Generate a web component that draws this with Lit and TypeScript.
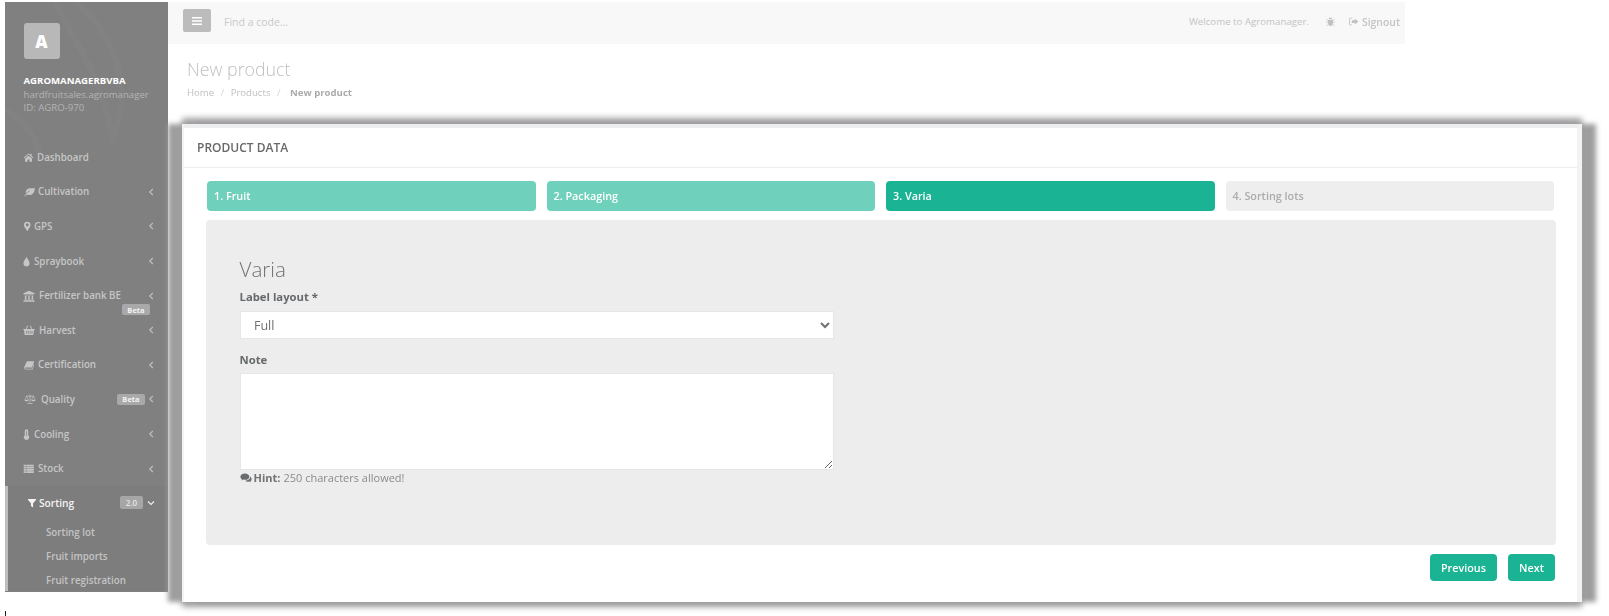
import { LitElement, html, css, svg } from "lit";
import { customElement } from "lit/decorators.js";

const ICONS: Record<string, any> = {
  home: svg`<path d="M8 2 1 8l.8 1L8 3.8 14.2 9l.8-1-2.5-2.1V2.6h-1.8v1.8z"/><path d="M3 9.6 8 5.4l5 4.2V14H9.5v-3h-3v3H3z"/>`,
  leaf: svg`<path d="M15.500 2c-1 1-3 1.400-6 1.400C5 3.400 2.500 6 2.500 9c0 .7.1 1.300.3 1.900C4 9 6 7.500 9.500 6.500 6.500 8 3.500 10.500.5 14.500l1.200.6c.7-1 1.400-1.900 2.300-2.700 1 .6 2.300.9 3.500.8C13.500 13 16 8 15.500 2z"/>`,
  marker: svg`<path fill-rule="evenodd" d="M8 1a5 5 0 0 0-5 5c0 1.100.3 1.900.7 2.700L8 15.500l4.300-6.800c.4-.8.7-1.600.7-2.700a5 5 0 0 0-5-5zm0 7.200a2.300 2.300 0 1 1 0-4.600 2.300 2.300 0 0 1 0 4.600z"/>`,
  tint: svg`<path d="M8 1c-.6 2.500-4.500 6-4.500 9.500a4.500 4.500 0 0 0 9 0C12.500 7 8.600 3.500 8 1z"/>`,
  bank: svg`<path d="M8 1 .5 4.300V5.500h15V4.300zM2 6.200v.8h12v-.8zM2.500 7.500v5h2v-5zM7 7.500v5h2v-5zM11.500 7.500v5h2v-5zM1.500 13v1h13v-1zM.5 14.300v1.200h15v-1.200z"/>`,
  basket: svg`<path d="M.5 6.500h15v1.500h-.8l-1 6.500H2.300l-1-6.500H.5z"/><path d="M3.500 6.500 5.800 2l1 .5-2 4zM12.500 6.500 10.200 2l-1 .5 2 4z"/><path fill="#808080" d="M4 9h1v4H4zM6.500 9h1v4h-1zM9 9h1v4H9zM11.500 9h1v4h-1z"/>`,
  book: svg`<path d="M4.500 2H15.500l-.6 1.500-2.700 8H2c-.7 0-1 .5-1 1s.4 1 1 1h10.500l2.600-8 .7.6-2.600 8.400H2c-1.200 0-2-1-2-2.200C0 12 .2 11.400.4 10.800z"/>`,
  scale: svg`<path d="M7.500 2h1v11h-1zM4.500 13.500h7v1h-7zM2.500 3.500h11v1h-11z"/><path fill="none" stroke="currentColor" stroke-width=".8" d="M3.500 4 1.200 9M3.500 4l2.300 5M12.500 4l-2.300 5M12.500 4l2.300 5"/><path d="M.5 9h6c0 1.300-1.300 2-3 2s-3-.7-3-2zM9.500 9h6c0 1.300-1.300 2-3 2s-3-.7-3-2z"/>`,
  thermo: svg`<path d="M5.500 3a2.500 2.500 0 0 1 5 0v6.200a3.800 3.800 0 1 1-5 0z"/><path fill="#808080" d="M7.500 3.200h1v6.800h-1z"/>`,
  list: svg`<path d="M1 2.500h14v2.300H1zM1 5.500h14v2.300H1zM1 8.500h14v2.300H1zM1 11.500h14v2.300H1z"/><path fill="#808080" d="M4 2.500h.6v11.300H4z"/>`,
  filter: svg`<path d="M1.500 1.500h13v1.300L9.700 8.200V15l-3.400-2.300V8.200L1.500 2.800z"/>`,
  bug: svg`<path d="M5.500 4.500a2.500 2.500 0 0 1 5 0zM4.500 5.500h7v5.500a3.500 3.500 0 0 1-7 0z"/><path fill="none" stroke="currentColor" stroke-width="1.100" d="M4.500 6.500 2 4.500M11.500 6.500l2.500-2M4.500 9H1.500M11.500 9h3M4.800 12l-2.300 2.500M11.200 12l2.300 2.500"/>`,
  signout: svg`<path d="M6 2.500H3.500A2 2 0 0 0 1.500 4.500v7a2 2 0 0 0 2 2H6v-1.200H3.500a.8.8 0 0 1-.8-.8v-7c0-.4.4-.8.800-.8H6z"/><path d="M10 3.500 15 8l-5 4.500V10H5.500V6H10z"/>`,
  comments: svg`<path d="M6.500 2C3 2 .5 3.800.5 6.200c0 1.400.8 2.600 2.100 3.300-.2.700-.6 1.300-1.100 1.900 1.100-.2 2.100-.7 2.900-1.300.7.200 1.400.3 2.100.3 3.500 0 6-1.900 6-4.200S10 2 6.500 2z"/><path d="M13.700 5.500c.1.300.1.500.1.800 0 3-3 5.100-6.700 5.200.9 1 2.400 1.500 3.900 1.500.5 0 1-.1 1.500-.2.600.5 1.300.8 2.100 1-.3-.5-.6-.9-.7-1.500 1-.6 1.600-1.500 1.600-2.600 0-1.700-.7-3.200-1.800-4.200z"/>`,
};

const icon = (n: string) => html`<svg class="ico" viewBox="0 0 16 16" fill="currentColor" aria-hidden="true">${ICONS[n]}</svg>`;

/* box: distance from icon column to label; size: drawn icon size; shift: optical offset of the glyph inside its box */
const NAV: any[] = [
  { i: "home", t: "Dashboard", box: 13.5, size: 11, shift: -0.5, arrow: false },
  { i: "leaf", t: "Cultivation", box: 14.5, size: 11, shift: 0 },
  { i: "marker", t: "GPS", box: 10.5, size: 10.5, shift: -2 },
  { i: "tint", t: "Spraybook", box: 10.5, size: 11, shift: -2.3 },
  { i: "bank", t: "Fertilizer bank BE", box: 15.5, size: 12, shift: -0.4, floatBadge: "Beta" },
  { i: "basket", t: "Harvest", box: 15.5, size: 12, shift: -0.4 },
  { i: "book", t: "Certification", box: 14.5, size: 10.5, shift: 0 },
  { i: "scale", t: "Quality", box: 17.5, size: 12, shift: 0.5, badge: "Beta" },
  { i: "thermo", t: "Cooling", box: 10.5, size: 11, shift: -3 },
  { i: "list", t: "Stock", box: 14.5, size: 11.500, shift: -0.7 },
];

@customElement("app-root")
export class AppRoot extends LitElement {
  static styles = css`
    :host {
      display: block;
      width: 1609px;
      height: 616px;
      position: relative;
      overflow: hidden;
      background: #fff;
      font-family: "Open Sans", "Liberation Sans", sans-serif;
      color: #676a6c;
    }
    .page { display: flex; align-items: flex-start; padding: 2px 0 0 5px; filter: blur(0.35px); height: 614px; box-sizing: border-box; }
    .ico { width: 100%; height: 100%; display: block; }

    .side {
      width: 163px; height: 590px; flex: none; background: #808080; position: relative; overflow: hidden;
      color: #c6c6c6; font-size: 9.750px; font-weight: 600;
    }
    .swirl { position: absolute; left: 0; top: 0; width: 163px; height: 170px; }
    .profile { position: relative; padding: 21px 0 0 18.500px; height: 138px; box-sizing: border-box; }
    .avatar {
      width: 36px; height: 36px; border-radius: 3px; background: #b8b8b8; color: #fff;
      display: flex; align-items: center; justify-content: center; font-size: 17px; font-weight: 800; margin-bottom: 14.500px;
    }
    .org { color: #fff; font-weight: 700; font-size: 9.600px; line-height: 14px; }
    .sub { font-weight: 400; font-size: 9.650px; line-height: 13.500px; color: #b4b4b4; }

    .nav { position: relative; display: flex; flex-direction: column; }
    .item { height: 34.600px; display: flex; align-items: center; padding: 0 14px 0 18.500px; box-sizing: border-box; position: relative; }
    .i { flex: none; height: 12px; display: flex; align-items: center; }
    .i .glyph { flex: none; display: block; }
    .arrow { width: 6px; height: 8px; flex: none; margin-left: auto; color: #bdbdbd; }
    .arrow svg { display: block; width: 100%; height: 100%; }
    .badge {
      background: #a9a9a9; color: #f2f2f2; font-size: 7.500px; font-weight: 700; border-radius: 2px;
      height: 11px; width: 28px; display: flex; align-items: center; justify-content: center; flex: none;
    }
    .inline-badge { margin-left: auto; margin-right: 3px; }
    .inline-badge + .arrow { margin-left: 0; }
    .float-badge { position: absolute; left: 117px; top: 26px; }

    .active { background: #7d7d7d; border-left: 3px solid #bebebe; height: 105.500px; }
    .active .item { padding-left: 18.500px; padding-right: 13px; height: 34px; color: #f4f4f4; font-weight: 600; font-size: 10.200px; }
    .active .i { width: 12.500px; }
    .active .i .ico { width: 10px; height: 10px; flex: none; }
    .ver {
      background: #a6a6a6; color: #e6e6e6; font-size: 8px; font-weight: 600; border-radius: 2px; width: 23px; height: 13px;
      display: flex; align-items: center; justify-content: center; margin-left: auto; margin-right: 4px; flex: none;
    }
    .ver + .arrow { margin-left: 0; width: 8px; height: 6px; color: #eee; }
    .subnav { padding: 1px 0 0 38px; display: flex; flex-direction: column; color: #c4c4c4; font-size: 9.750px; }
    .subnav span { height: 24px; display: flex; align-items: center; }

    .main { width: 1237px; flex: none; }
    .top {
      height: 42px; background: #f8f8f8; display: flex; align-items: center; padding: 0 5px 5px 15px; box-sizing: border-box;
      color: #c4c4c4; font-size: 9.700px;
    }
    .top span { margin-top: 2px; }
    .burger { width: 28px; height: 23px; background: #bcbcbc; border-radius: 2px; color: #fff; display: flex; align-items: center; justify-content: center; margin-right: 13px; }
    .burger svg { width: 10px; height: 10px; display: block; }
    .top .search { font-size: 10.500px; color: #c8c8c8; }
    .welcome { margin-left: auto; }
    .top .bug { width: 11px; height: 11px; margin: 2px 12px 0 16px; color: #c0c0c0; flex: none; }
    .top .so { width: 11px; height: 11px; margin-right: 3px; color: #c0c0c0; flex: none; }
    .signout { font-weight: 600; font-size: 10.400px; }

    .head { padding: 12px 0 0 19px; }
    .title { font-size: 17.800px; font-weight: 300; color: #bfbfbf; line-height: 26px; margin: 0; }
    .crumbs { font-size: 9.600px; color: #c0c0c0; margin-top: 4px; display: flex; line-height: 14px; }
    .crumbs i { font-style: normal; margin: 0 6.500px; color: #d6d6d6; }
    .crumbs b { color: #ababab; font-weight: 700; margin-left: 3px; }

    .card {
      position: absolute; left: 182px; top: 124px; width: 1400px; height: 478px; box-sizing: border-box;
      background: #fff; border-top: 4px solid #eceef0; border-left: 2px solid #f3f3f3; border-right: 5px solid #f3f3f4;
      box-shadow: -14px 0 5px 0 #9e9e9e, 14px 0 5px 0 #9e9e9e, 0 -6px 6px 0 #a3a1a1, 0 5px 6px 0 #a0a0a0;
      filter: blur(0.3px);
      display: flex; flex-direction: column;
    }
    .card-head {
      height: 40px; flex: none; border-bottom: 1px solid #eee; box-sizing: border-box; padding-left: 13px;
      display: flex; align-items: center; font-size: 12px; font-weight: 600; color: #686868;
    }
    .body { padding: 13px 22px 0 23px; display: flex; flex-direction: column; }
    .steps { display: grid; grid-template-columns: repeat(4, 328.500px); column-gap: 11px; }
    .step {
      height: 30px; border-radius: 4px; background: #6fd1bb; color: #fff; font-size: 10.800px; font-weight: 600;
      display: flex; align-items: center; padding: 0 0 1.500px 7px; box-sizing: border-box;
    }
    .step.current { background: #1ab394; }
    .step.off { background: #eee; color: #ababab; }
    .panel {
      margin: 9px -1px 0 -1px; height: 325px; background: #ededed; border-radius: 4px; box-sizing: border-box;
      padding: 35px 0 0 33.500px; display: flex; flex-direction: column; align-items: flex-start;
    }
    h3 { margin: 0; font-size: 20.600px; font-weight: 300; color: #707274; line-height: 29px; }
    label { font-size: 11.300px; font-weight: 700; color: #676a6c; line-height: 16px; display: block; }
    .lab1 { margin-top: 5px; margin-bottom: 6px; }
    .lab2 { margin-top: 13px; margin-bottom: 5px; }
    select {
      width: 594px; height: 28px; background: #fff; border: 1px solid #e6e6e6; border-radius: 0; padding: 0 9px;
      font: 400 12.500px "Open Sans", sans-serif; color: #707070; display: block; box-sizing: border-box; outline: none; margin-left: .5px;
    }
    textarea {
      width: 594px; height: 97px; background: #fff; border: 1px solid #e6e6e6; border-radius: 0; box-sizing: border-box;
      display: block; margin: 0 0 0 .5px; outline: none;
    }
    .hint { display: flex; align-items: center; font-size: 11px; color: #898b8d; margin-top: 0; line-height: 15px; }
    .hint svg { width: 12px; height: 12px; display: block; margin-right: 2px; color: #6a6c6e; }
    .hint b { font-weight: 700; margin-right: 3px; color: #707274; }
    .actions { display: flex; justify-content: flex-end; gap: 11px; margin-top: 8.500px; }
    .btn {
      height: 27px; background: #1ab394; color: #fff; border: none; border-radius: 4px; font: 600 10.800px "Open Sans", sans-serif;
      padding: 0; display: flex; align-items: center; justify-content: center;
    }
    .prev { width: 67px; }
    .next { width: 47px; }
    .tick { position: absolute; left: 5px; top: 611px; width: 1px; height: 5px; background: #222; }
  `;

  private chevLeft() {
    return html`<span class="arrow"><svg viewBox="0 0 6 8"><path d="M4.800 1 1.800 4l3 3" fill="none" stroke="currentColor" stroke-width="1.200"/></svg></span>`;
  }

  render() {
    return html`
      <div class="page">
        <aside class="side">
          <svg class="swirl" viewBox="0 0 163 170" fill="none" stroke="#858585" stroke-width="6" opacity=".5" aria-hidden="true">
            <path d="M50 0c20 40 50 80 58 140" />
            <path d="M70 0c40 30 60 90 36 140" />
            <path d="M0 108c20 10 30 25 35 45" />
          </svg>
          <div class="profile">
            <div class="avatar">A</div>
            <div class="org">AGROMANAGERBVBA</div>
            <div class="sub">hardfruitsales.agromanager</div>
            <div class="sub">ID: AGRO-970</div>
          </div>
          <nav class="nav">
            ${NAV.map((n) => html`
              <div class="item">
                <span class="i" style="width:${n.box}px">
                  <span class="glyph" style="width:${n.size}px;height:${n.size}px;margin-left:${n.shift}px">${icon(n.i)}</span>
                </span>
                <span>${n.t}</span>
                ${n.badge ? html`<span class="badge inline-badge">${n.badge}</span>` : ""}
                ${n.arrow === false ? "" : this.chevLeft()}
                ${n.floatBadge ? html`<span class="badge float-badge">${n.floatBadge}</span>` : ""}
              </div>
            `)}
            <div class="active">
              <div class="item">
                <span class="i">${icon("filter")}</span>
                <span>Sorting</span>
                <span class="ver">2.0</span>
                <span class="arrow"><svg viewBox="0 0 8 6"><path d="M1 1.500l3 3 3-3" fill="none" stroke="currentColor" stroke-width="1.200"/></svg></span>
              </div>
              <div class="subnav">
                <span>Sorting lot</span>
                <span>Fruit imports</span>
                <span>Fruit registration</span>
              </div>
            </div>
          </nav>
        </aside>
        <div class="main">
          <div class="top">
            <div class="burger"><svg viewBox="0 0 10 10" fill="currentColor"><path d="M0 1h10v1.500H0zM0 4.300h10v1.500H0zM0 7.500h10V9H0z"/></svg></div>
            <span class="search">Find a code...</span>
            <span class="welcome">Welcome to Agromanager.</span>
            <span class="bug">${icon("bug")}</span>
            <span class="so">${icon("signout")}</span>
            <span class="signout">Signout</span>
          </div>
          <div class="head">
            <h2 class="title">New product</h2>
            <div class="crumbs"><span>Home</span><i>/</i><span>Products</span><i>/</i><b>New product</b></div>
          </div>
        </div>
      </div>
      <section class="card">
        <div class="card-head">PRODUCT DATA</div>
        <div class="body">
          <div class="steps">
            <div class="step">1. Fruit</div>
            <div class="step">2. Packaging</div>
            <div class="step current">3. Varia</div>
            <div class="step off">4. Sorting lots</div>
          </div>
          <div class="panel">
            <h3>Varia</h3>
            <label class="lab1">Label layout *</label>
            <select><option>Full</option></select>
            <label class="lab2">Note</label>
            <textarea></textarea>
            <div class="hint"><svg viewBox="0 0 16 16" fill="currentColor">${ICONS.comments}</svg><b>Hint:</b> 250 characters allowed!</div>
          </div>
          <div class="actions">
            <button class="btn prev">Previous</button>
            <button class="btn next">Next</button>
          </div>
        </div>
      </section>
      <div class="tick"></div>
    `;
  }
}
